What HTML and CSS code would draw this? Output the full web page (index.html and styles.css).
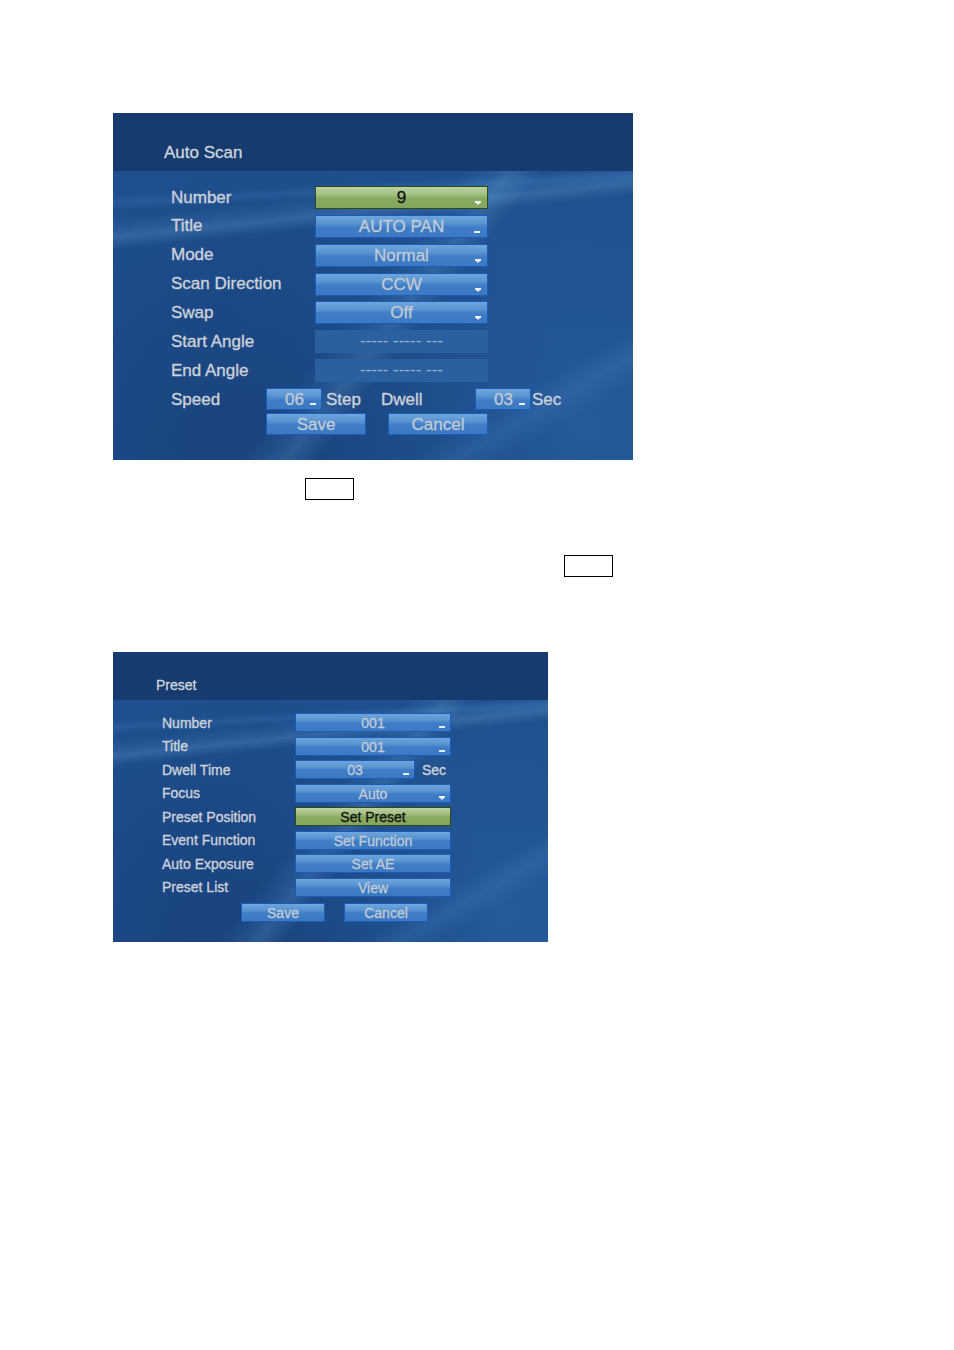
FILE: index.html
```html
<!DOCTYPE html>
<html>
<head>
<meta charset="utf-8">
<link rel="stylesheet" href="styles.css">
</head>
<body>
<div class="page">
  <section class="panel scan">
    <div class="head">Auto Scan</div>
    <div class="body">
      <div class="grid">
        <div class="lbl">Number</div><div class="fld green">9<i class="dd"></i></div>
        <div class="lbl">Title</div><div class="fld">AUTO PAN<i class="cur"></i></div>
        <div class="lbl">Mode</div><div class="fld">Normal<i class="dd"></i></div>
        <div class="lbl">Scan Direction</div><div class="fld">CCW<i class="dd"></i></div>
        <div class="lbl">Swap</div><div class="fld">Off<i class="dd"></i></div>
        <div class="lbl">Start Angle</div><div class="fld dis">----- ----- ---</div>
        <div class="lbl">End Angle</div><div class="fld dis">----- ----- ---</div>
      </div>
      <div class="speed">
        <div class="lbl w-speed">Speed</div>
        <div class="fld small">06<i class="cur"></i></div>
        <div class="lbl w-step">Step</div>
        <div class="lbl w-dwell">Dwell</div>
        <div class="fld small">03<i class="cur"></i></div>
        <div class="lbl w-sec">Sec</div>
      </div>
      <div class="btns">
        <div class="fld btn">Save</div>
        <div class="fld btn">Cancel</div>
      </div>
    </div>
  </section>

  <div class="mark mark1"></div>
  <div class="mark mark2"></div>

  <section class="panel preset">
    <div class="head">Preset</div>
    <div class="body">
      <div class="grid">
        <div class="lbl">Number</div><div class="fld">001<i class="cur"></i></div>
        <div class="lbl">Title</div><div class="fld">001<i class="cur"></i></div>
        <div class="lbl">Dwell Time</div><div class="row"><div class="fld dwell">03<i class="cur"></i></div><span class="lbl sec">Sec</span></div>
        <div class="lbl">Focus</div><div class="fld">Auto<i class="dd"></i></div>
        <div class="lbl">Preset Position</div><div class="fld green">Set Preset</div>
        <div class="lbl">Event Function</div><div class="fld">Set Function</div>
        <div class="lbl">Auto Exposure</div><div class="fld">Set AE</div>
        <div class="lbl">Preset List</div><div class="fld">View</div>
      </div>
      <div class="btns">
        <div class="fld btn">Save</div>
        <div class="fld btn">Cancel</div>
      </div>
    </div>
  </section>
</div>
</body>
</html>
```

FILE: styles.css
```css
html, body {
  margin: 0;
  padding: 0;
  background: #ffffff;
}

.page {
  padding-top: 113px;
  padding-left: 113px;
  font-family: "Liberation Sans", Arial, sans-serif;
}

.panel {
  position: relative;
  overflow: hidden;
  background-color: #1f4f8e;
  background-image:
    linear-gradient(174deg, transparent 0%, transparent 26%, rgba(120,190,255,0.10) 29%, rgba(150,210,255,0.18) 31%, transparent 34%, transparent 100%),
    linear-gradient(177deg, transparent 0%, transparent 22%, rgba(120,190,255,0.10) 24%, transparent 26%, transparent 100%),
    linear-gradient(128deg, transparent 0%, transparent 50%, rgba(120,190,255,0.10) 54%, rgba(150,210,255,0.16) 56%, transparent 60%, transparent 100%),
    linear-gradient(150deg, transparent 0%, transparent 80%, rgba(120,190,255,0.10) 84%, transparent 88%),
    radial-gradient(ellipse at 30% 95%, rgba(10,40,90,0.35), transparent 60%),
    radial-gradient(ellipse at 90% 90%, rgba(50,110,180,0.35), transparent 60%);
}

.panel .head {
  background: #163b6e;
  color: #d0d5dd;
  -webkit-text-stroke: 0.3px #d0d5dd;
}

.lbl {
  color: #ccd1d9;
  white-space: nowrap;
  -webkit-text-stroke: 0.35px #ccd1d9;
}

.fld {
  position: relative;
  box-sizing: border-box;
  border: 1px solid #1c5bb8;
  background: linear-gradient(#6ea5dd 0%, #5a95d2 35%, #3f7ec6 55%, #3b79c2 100%);
  color: #c3cbd6;
  text-align: center;
  white-space: nowrap;
  -webkit-text-stroke: 0.3px #c3cbd6;
}

.fld.green {
  border-color: #2c4a1c;
  background: linear-gradient(#bcd29e 0%, #a3bf82 35%, #89aa61 55%, #84a55c 100%);
  color: #111111;
  -webkit-text-stroke: 0.3px #111111;
}

.fld.dis {
  border: none;
  background: #2a60a0;
  color: #9db1cc;
  -webkit-text-stroke: 0;
}

.cur {
  position: absolute;
  right: 7px;
  bottom: 4px;
  width: 6px;
  height: 2px;
  background: #e8eef6;
}

.dd {
  position: absolute;
  right: 6px;
  bottom: 5px;
  width: 6px;
  height: 2px;
  background: #f0f4f8;
}
.dd::after {
  content: "";
  position: absolute;
  left: 1px;
  top: 2px;
  border-left: 2px solid transparent;
  border-right: 2px solid transparent;
  border-top: 2px solid #f0f4f8;
}

/* ---------- Auto Scan panel ---------- */
.scan {
  width: 520px;
  height: 347px;
  font-size: 17px;
}
.scan .head {
  height: 58px;
  box-sizing: border-box;
  padding: 30px 0 0 51px;
  font-size: 17px;
  line-height: 20px;
}
.scan .body {
  padding: 15px 0 0 58px;
}
.scan .grid {
  display: grid;
  grid-template-columns: 144px 173px;
  grid-auto-rows: 23px;
  row-gap: 5.85px;
  align-items: center;
}
.scan .grid .fld,
.scan .speed .fld,
.scan .btns .fld {
  height: 23px;
  line-height: 22px;
}
.scan .speed {
  display: flex;
  align-items: center;
  margin-top: 5.85px;
  height: 22px;
}
.scan .speed .lbl {
  padding-top: 2px;
}
.scan .speed .fld.small {
  width: 56px;
  height: 22px;
  line-height: 22px;
  text-align: left;
  padding-left: 18px;
}
.scan .speed .fld.small .cur { right: 5px; }
.w-speed { width: 95px; }
.w-step { width: 55px; margin-left: 4px; }
.w-dwell { width: 94px; }
.w-sec { margin-left: 1px; }

.scan .btns {
  display: flex;
  gap: 22px;
  margin-top: 3px;
  padding-left: 95px;
}
.scan .btns .btn {
  width: 100px;
  height: 22px;
}

/* ---------- markers ---------- */
.mark {
  width: 49px;
  height: 22px;
  box-sizing: border-box;
  border: 1px solid #000000;
}
.mark1 {
  margin-top: 18px;
  margin-left: 192px;
}
.mark2 {
  margin-top: 55px;
  margin-left: 451px;
}

/* ---------- Preset panel ---------- */
.preset {
  margin-top: 75px;
  width: 435px;
  height: 290px;
  font-size: 14px;
}
.preset .head {
  height: 48px;
  box-sizing: border-box;
  padding: 25px 0 0 43px;
  font-size: 14px;
  line-height: 17px;
}
.preset .body {
  padding: 13px 0 0 49px;
}
.preset .grid {
  display: grid;
  grid-template-columns: 133px 156px;
  grid-auto-rows: 19px;
  row-gap: 4.57px;
  align-items: center;
}
.preset .fld {
  height: 19px;
  line-height: 18px;
}
.preset .cur { right: 5px; bottom: 3px; }
.preset .dd { right: 5px; bottom: 4px; }
.preset .row {
  display: flex;
  align-items: center;
}
.preset .fld.dwell {
  width: 120px;
}
.preset .sec {
  margin-left: 7px;
}
.preset .btns {
  display: flex;
  gap: 19px;
  margin-top: 6px;
  padding-left: 79px;
}
.preset .btns .btn {
  width: 84px;
  height: 19px;
}
```
